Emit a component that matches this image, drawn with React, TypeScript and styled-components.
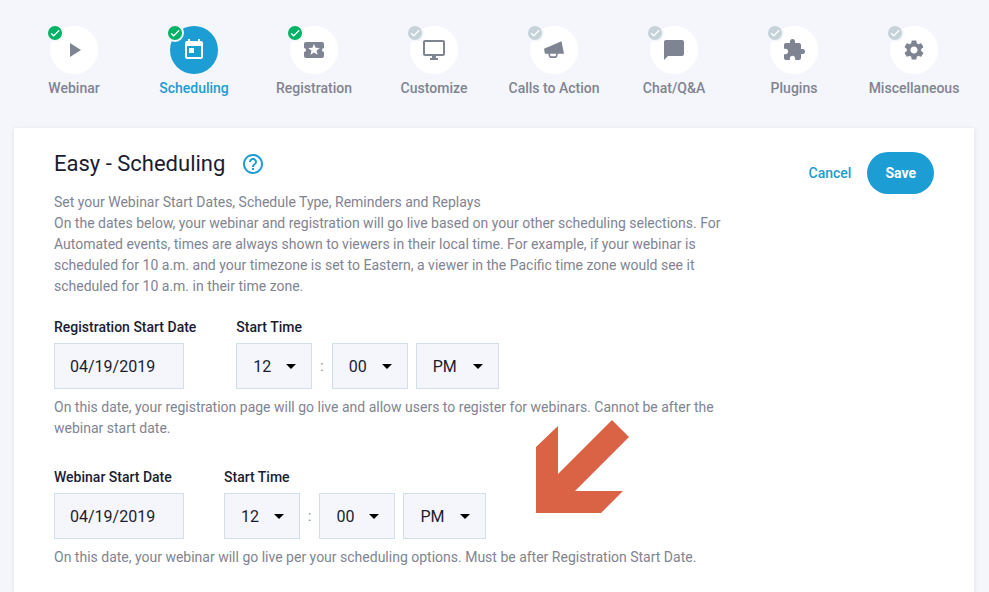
import React, { useId } from "react";
import styled, { createGlobalStyle } from "styled-components";
import {
  MdPlayArrow,
  MdToday,
  MdLocalPlay,
  MdOutlineDesktopWindows,
  MdChatBubble,
  MdExtension,
  MdSettings,
  MdHelpOutline,
} from "react-icons/md";

const color = {
  page: "#f5f6fb",
  blue: "#1c9dd3",
  green: "#00b266",
  pending: "#c5d3d9",
  grey: "#7f8492",
  ink: "#1b1c32",
  line: "#d0e0e5",
  arrow: "#d96344",
};

const GlobalStyle = createGlobalStyle`
  *, *::before, *::after { box-sizing: border-box; }
  body {
    margin: 0;
    background: ${color.page};
    color: ${color.ink};
    font-family: Roboto, "Liberation Sans", sans-serif;
    font-size: 14px;
    line-height: 21px;
  }
  #root { display: flex; flex-direction: column; min-height: 100vh; }
`;

const Page = styled.div`
  flex: 1;
  display: flex;
  flex-direction: column;
  padding: 26px 15px 0 14px;
`;

const Steps = styled.nav`
  display: flex;
  margin-bottom: 29px;
`;

const Step = styled.a<{ $active?: boolean }>`
  flex: 1 1 0;
  display: flex;
  flex-direction: column;
  align-items: center;
  gap: 4px;
  color: ${(p) => (p.$active ? color.blue : color.grey)};
  font-weight: 500;
  text-decoration: none;
  white-space: nowrap;
`;

const StepDisc = styled.span<{ $active?: boolean }>`
  position: relative;
  display: flex;
  align-items: center;
  justify-content: center;
  width: 48px;
  height: 48px;
  border-radius: 50%;
  background: ${(p) => (p.$active ? color.blue : "#fff")};
  color: ${(p) => (p.$active ? "#fff" : color.grey)};
`;

const StepBadge = styled.svg<{ $done?: boolean }>`
  position: absolute;
  left: -4px;
  top: -2px;
  width: 18px;
  height: 18px;
  border: 2px solid ${color.page};
  border-radius: 50%;
  background: ${(p) => (p.$done ? color.green : color.pending)};
`;

const Card = styled.main`
  flex: 1;
  padding: 24px 40px;
  background: #fff;
  box-shadow: 0 1px 4px rgba(60, 70, 100, 0.14);
`;

const CardHeader = styled.header`
  display: flex;
  justify-content: space-between;
  align-items: flex-start;
  gap: 24px;
`;

const Intro = styled.div`
  flex: 0 1 680px;
`;

const TitleRow = styled.div`
  display: flex;
  align-items: center;
  gap: 16px;
  margin-bottom: 16px;
`;

const Title = styled.h1`
  margin: 0;
  font-size: 22px;
  line-height: 24px;
  font-weight: 400;
`;

const HelpButton = styled.button`
  display: flex;
  padding: 0;
  border: 0;
  background: none;
  color: ${color.blue};
  cursor: pointer;
`;

const Note = styled.p`
  max-width: 680px;
  margin: 0;
  color: ${color.grey};
`;

const Actions = styled.div`
  display: flex;
  align-items: center;
  gap: 16px;
`;

const TextButton = styled.button`
  padding: 0;
  border: 0;
  background: none;
  color: ${color.blue};
  font: inherit;
  font-weight: 500;
  cursor: pointer;
`;

const PrimaryButton = styled.button`
  height: 42px;
  padding: 0 18px;
  border: 0;
  border-radius: 21px;
  background: ${color.blue};
  color: #fff;
  font: inherit;
  font-weight: 700;
  cursor: pointer;
`;

const Form = styled.form`
  position: relative;
  display: flex;
  flex-direction: column;
  gap: 28px;
  margin-top: 20px;
`;

const FieldRow = styled.div`
  display: flex;
  gap: 40px;
  margin-bottom: 8px;
`;

const Field = styled.div`
  display: flex;
  flex-direction: column;
  align-items: flex-start;
  gap: 5px;
`;

const Label = styled.label`
  font-weight: 500;
`;

const DateInput = styled.input`
  width: 130px;
  height: 46px;
  padding: 0 15px;
  border: 1px solid ${color.line};
  border-radius: 0;
  background: ${color.page};
  color: ${color.ink};
  font: inherit;
  font-size: 16px;
`;

const TimeRow = styled.div`
  display: flex;
  align-items: center;
  gap: 8px;
  color: ${color.grey};
`;

const SelectWrap = styled.span<{ $wide?: boolean }>`
  display: grid;
  align-items: center;
  width: ${(p) => (p.$wide ? "83px" : "76px")};
  height: 46px;

  & > * { grid-area: 1 / 1; }
`;

const Select = styled.select`
  appearance: none;
  width: 100%;
  height: 100%;
  padding: 0 16px;
  border: 1px solid ${color.line};
  border-radius: 0;
  background: ${color.page};
  color: ${color.ink};
  font: inherit;
  font-size: 16px;
`;

const Caret = styled.svg`
  justify-self: end;
  width: 10px;
  height: 5px;
  margin-right: 16px;
  pointer-events: none;
`;

const PointerArrow = styled.svg`
  position: absolute;
  left: 482px;
  top: 103px;
  width: 94px;
  height: 94px;
  fill: ${color.arrow};
  pointer-events: none;
`;

function Megaphone() {
  return (
    <svg width="24" height="24" viewBox="0 0 24 24" aria-hidden="true">
      <path fill="currentColor" d="M2 10.800 19.500 3.200 22 15.700H2.900z" />
      <path
        fill="none"
        stroke="currentColor"
        strokeWidth="1.600"
        strokeLinejoin="round"
        d="M7 15 7.700 18.300 8.500 19.100H13.700L14.500 18.300 15.200 15"
      />
    </svg>
  );
}

type StepInfo = { label: string; icon: React.ReactNode; done?: boolean; active?: boolean };

const steps: StepInfo[] = [
  { label: "Webinar", icon: <MdPlayArrow size={24} />, done: true },
  { label: "Scheduling", icon: <MdToday size={24} />, done: true, active: true },
  { label: "Registration", icon: <MdLocalPlay size={24} />, done: true },
  { label: "Customize", icon: <MdOutlineDesktopWindows size={24} /> },
  { label: "Calls to Action", icon: <Megaphone /> },
  { label: "Chat/Q&A", icon: <MdChatBubble size={24} /> },
  { label: "Plugins", icon: <MdExtension size={24} /> },
  { label: "Miscellaneous", icon: <MdSettings size={24} /> },
];

const hours = Array.from({ length: 12 }, (_, i) => String(i + 1).padStart(2, "0"));
const minutes = ["00", "15", "30", "45"];

type TimeSelectProps = {
  id?: string;
  name: string;
  value: string;
  options: string[];
  wide?: boolean;
};

function TimeSelect({ id, name, value, options, wide }: TimeSelectProps) {
  return (
    <SelectWrap $wide={wide}>
      <Select id={id} defaultValue={value} aria-label={id ? undefined : name}>
        {options.map((o) => (
          <option key={o}>{o}</option>
        ))}
      </Select>
      <Caret viewBox="0 0 10 5" aria-hidden="true">
        <path d="M0 0h10L5 5z" />
      </Caret>
    </SelectWrap>
  );
}

function StartFields({ label, note }: { label: string; note: string }) {
  const id = useId();
  return (
    <section>
      <FieldRow>
        <Field>
          <Label htmlFor={`${id}-date`}>{label}</Label>
          <DateInput id={`${id}-date`} defaultValue="04/19/2019" />
        </Field>
        <Field>
          <Label htmlFor={`${id}-hour`}>Start Time</Label>
          <TimeRow>
            <TimeSelect id={`${id}-hour`} name="Hour" value="12" options={hours} />
            <span>:</span>
            <TimeSelect name="Minute" value="00" options={minutes} />
            <TimeSelect name="AM or PM" value="PM" options={["AM", "PM"]} wide />
          </TimeRow>
        </Field>
      </FieldRow>
      <Note>{note}</Note>
    </section>
  );
}

export default function App() {
  return (
    <>
      <GlobalStyle />
      <Page>
        <Steps>
          {steps.map((s) => (
            <Step key={s.label} href="#" $active={s.active} aria-current={s.active ? "step" : undefined}>
              <StepDisc $active={s.active}>
                {s.icon}
                <StepBadge $done={s.done} viewBox="0 0 14 14" aria-hidden="true">
                  <path d="M3 7.200 5.700 9.800 11.200 4.300" fill="none" stroke="#fff" strokeWidth="1.300" />
                </StepBadge>
              </StepDisc>
              {s.label}
            </Step>
          ))}
        </Steps>
        <Card>
          <CardHeader>
            <Intro>
              <TitleRow>
                <Title>Easy - Scheduling</Title>
                <HelpButton type="button" aria-label="Help">
                  <MdHelpOutline size={24} />
                </HelpButton>
              </TitleRow>
              <Note>Set your Webinar Start Dates, Schedule Type, Reminders and Replays</Note>
              <Note>
                On the dates below, your webinar and registration will go live based on your other scheduling
                selections. For Automated events, times are always shown to viewers in their local time. For
                example, if your webinar is scheduled for 10 a.m. and your timezone is set to Eastern, a viewer
                in the Pacific time zone would see it scheduled for 10 a.m. in their time zone.
              </Note>
            </Intro>
            <Actions>
              <TextButton type="button">Cancel</TextButton>
              <PrimaryButton type="submit" form="schedule">Save</PrimaryButton>
            </Actions>
          </CardHeader>
          <Form id="schedule" onSubmit={(e) => e.preventDefault()}>
            <StartFields
              label="Registration Start Date"
              note="On this date, your registration page will go live and allow users to register for webinars. Cannot be after the webinar start date."
            />
            <StartFields
              label="Webinar Start Date"
              note="On this date, your webinar will go live per your scheduling options. Must be after Registration Start Date."
            />
            <PointerArrow viewBox="0 0 94 94" aria-hidden="true">
              <path d="M76 0 93 17 39 71H87L65 93H0V27L22 6V54z" />
            </PointerArrow>
          </Form>
        </Card>
      </Page>
    </>
  );
}
